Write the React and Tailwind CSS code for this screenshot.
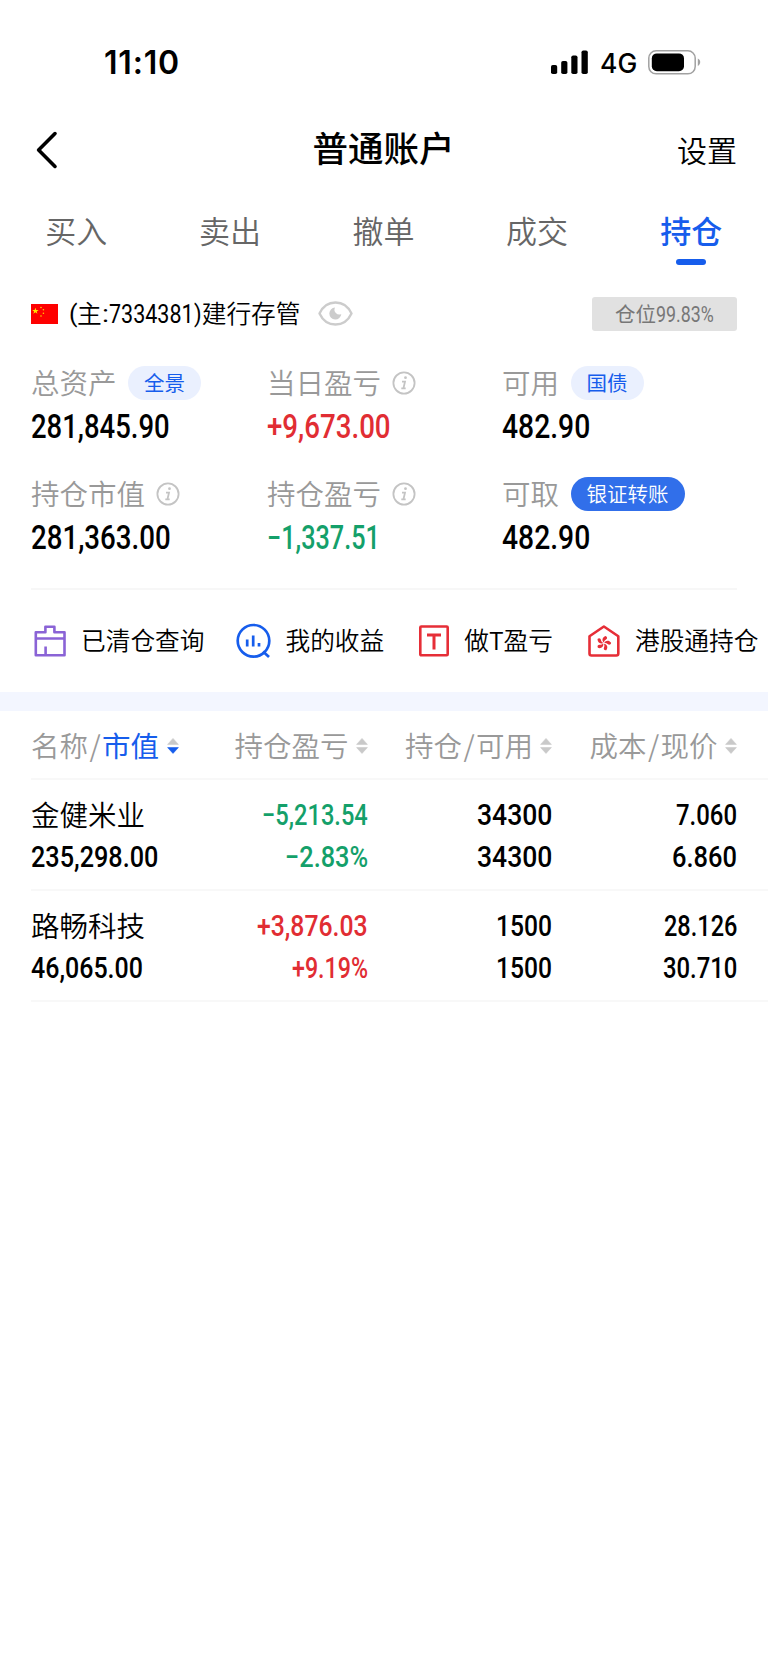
import React, { useLayoutEffect, useRef, useState } from 'react';

// Squeezes a figure to a fixed width so it reads like a condensed numeral face
const Num = ({ children, w, className = "" }) => {
  const ref = useRef(null);
  const [scale, setScale] = useState(0.84);

  useLayoutEffect(() => {
    setScale(w / ref.current.offsetWidth);
  }, [w, children]);

  return (
    <span className={`block overflow-visible whitespace-nowrap font-['Roboto','Noto_Sans_CJK_SC',sans-serif] ${className}`} style={{ width: w }}>
      <span ref={ref} className="inline-block origin-left" style={{ transform: `scaleX(${scale})` }}>{children}</span>
    </span>
  );
};

const InfoIcon = () => (
  <svg width="24" height="24" viewBox="0 0 24 24" fill="none" stroke="#c4c4c4">
    <circle cx="12" cy="12" r="10.6" strokeWidth="1.8" />
    <circle cx="13.5" cy="6.7" r="1.4" fill="#c4c4c4" stroke="none" />
    <path d="M10 10.6h3l-1.6 6.9M9.3 17.4h4.4" strokeWidth="1.8" />
  </svg>
);

const SortIcon = ({ active }) => (
  <svg width="12" height="16" viewBox="0 0 12 16">
    <path d="M6 0.4 11.4 6.4H0.6z" fill="#c9c9c9" stroke="#c9c9c9" strokeWidth="0.6" strokeLinejoin="round" />
    <path d="M6 15.4 11.4 9.6H0.6z" fill={active ? "#165dec" : "#c9c9c9"} stroke={active ? "#165dec" : "#c9c9c9"} strokeWidth="0.6" strokeLinejoin="round" />
  </svg>
);

const StatusBar = () => (
  <div className="flex h-[110px] items-start pt-[46px] text-black font-['Inter',sans-serif]">
    <div className="ml-[104px] flex h-[34px] w-[447px] items-center text-[32px] font-semibold leading-none tracking-[0.8px]">11:10</div>
    <svg className="mt-[4px]" width="37" height="24" viewBox="0 0 37 24">
      <rect x="0" y="15" width="6.2" height="9" rx="1.8" />
      <rect x="10.2" y="11" width="6.2" height="13" rx="1.8" />
      <rect x="20.3" y="5.5" width="6.2" height="18.5" rx="1.8" />
      <rect x="30.5" y="0.5" width="6.3" height="23.5" rx="1.8" />
    </svg>
    <div className="ml-[12px] flex h-[34px] w-[48px] items-center text-[26.5px] font-[450] leading-none">4G</div>
    <svg className="mt-[4px]" width="53" height="25" viewBox="0 0 53 25">
      <rect x="0.8" y="0.8" width="46.4" height="23" rx="7.3" fill="none" stroke="#a1a1a1" strokeWidth="1.5" />
      <rect x="3.8" y="3.4" width="32.2" height="17.8" rx="5" />
      <path d="M49.8 8.6c3.2 1.6 3.2 5.8 0 7.4z" fill="#a1a1a1" />
    </svg>
  </div>
);

const Header = () => (
  <div className="grid h-[80px] grid-cols-3 items-center pl-[30px] pr-[31px] text-black">
    <svg className="ml-[6px]" width="22" height="38" viewBox="0 0 22 38" fill="none" stroke="#000" strokeWidth="3.6" strokeLinecap="round" strokeLinejoin="round">
      <path d="M19 2.6 2.6 19 19 35.4" />
    </svg>
    <h1 className="pb-[6px] text-center text-[35.5px] font-medium leading-none">普通账户</h1>
    <div className="pb-[2px] text-right text-[30px] font-[350] leading-none">设置</div>
  </div>
);

const tabs = ["买入", "卖出", "撤单", "成交", "持仓"];

const Tabs = () => (
  <div className="grid h-[86px] grid-cols-5 text-[31px] leading-none text-[#666]">
    {tabs.map((tab) => (
      <div key={tab} className={`flex flex-col items-center pt-[24px] ${tab === "持仓" ? "font-medium text-[#165dec]" : "pr-px font-[350]"}`}>
        {tab}
        {tab === "持仓" && <span className="mt-[13.5px] h-[6px] w-[30px] rounded-full bg-[#165dec]" />}
      </div>
    ))}
  </div>
);

const Account = () => (
  <div className="flex h-[76px] items-center pl-[31px] pr-[31px] text-[24.7px] leading-none text-black">
    <svg width="27" height="20" viewBox="0 0 27 20">
      <rect width="27" height="20" fill="#fe0000" />
      <path d="M4.4 3.7 5.2 6h2.4L5.7 7.4l.7 2.3-2-1.4-2 1.4.7-2.3L1.2 6h2.4z" fill="#ffe600" />
      <circle cx="10" cy="3.5" r="0.8" fill="#ffd200" />
      <circle cx="12.4" cy="5.8" r="0.8" fill="#ffd200" />
      <circle cx="12.4" cy="9.3" r="0.8" fill="#ffd200" />
      <circle cx="10" cy="12" r="0.8" fill="#ffd200" />
    </svg>
    <Num w={8} className="ml-[11px]">(</Num>
    <span className="pb-[3px] font-[350]">主</span>
    <Num w={7}>:</Num>
    <Num w={85} className="pt-px text-[25.8px]">7334381</Num>
    <Num w={8}>)</Num>
    <span className="pb-[3px] font-[350]">建行存管</span>
    <svg className="ml-[18px] mb-px" width="35" height="25" viewBox="0 0 35 25" fill="none">
      <path d="M1.5 12.5C5 5 11 1.5 17.5 1.5S30 5 33.5 12.5C30 20 24 23.5 17.5 23.5S5 20 1.5 12.5Z" stroke="#ccc" strokeWidth="2.4" strokeLinejoin="round" />
      <path d="M17 6.5a6 6 0 1 0 6.3 6.5 4.8 4.8 0 0 1-6.3-6.5Z" fill="#ccc" />
    </svg>
    <div className="ml-auto flex h-[34px] w-[145px] items-center justify-center rounded-[3px] bg-[#e1e1e1] text-[20.5px] text-[#777]">
      <span className="pb-[2px]">仓位</span><Num w={58} className="pt-px text-[21.5px]">99.83%</Num>
    </div>
  </div>
);

const stats = [
  { label: "总资产", value: "281,845.90", w: 139, pill: "全景" },
  { label: "当日盈亏", value: "+9,673.00", w: 124, info: true, color: "text-[#e12d33]" },
  { label: "可用", value: "482.90", w: 88, pill: "国债" },
  { label: "持仓市值", value: "281,363.00", w: 140, info: true },
  { label: "持仓盈亏", value: "−1,337.51", w: 113, info: true, color: "text-[#14a06a]" },
  { label: "可取", value: "482.90", w: 88, pill: "银证转账", solid: true },
];

const Stats = () => (
  <div className="mx-[31px] grid h-[238px] grid-cols-[236px_235px_1fr] grid-rows-[111px_127px] border-b-2 border-[#f7f7f7]">
    {stats.map((s) => (
      <div key={s.label} className="pt-[13px] leading-none">
        <div className="flex h-[35px] items-center text-[28.5px] text-[#999]">
          <span className="pb-px font-[350]">{s.label}</span>
          {s.info && <span className="ml-[11px]"><InfoIcon /></span>}
          {s.pill && (
            <span className={`ml-[11.5px] flex h-[34px] items-center rounded-full px-4 pb-px text-[20.5px] ${s.solid ? "bg-[#316fea] font-[350] text-white" : "bg-[#eaf0fe] text-[#165dec]"}`}>
              {s.pill}
            </span>
          )}
        </div>
        <Num w={s.w} className={`mt-[10.5px] text-[32.8px] font-medium ${s.color || "text-black"}`}>{s.value}</Num>
      </div>
    ))}
  </div>
);

const Shortcuts = () => (
  <div className="flex h-[102px] items-center overflow-hidden whitespace-nowrap pl-[34px] text-[24.7px] font-[350] leading-none text-black">
    <svg width="32" height="32" viewBox="0 0 32 32" fill="none" stroke="#8a63d6" strokeWidth="2.6" strokeLinejoin="round">
      <path d="M1.8 30.3V7.2h9.6V1.7h9v5.5h10.100v23.100zM1.8 13.500h28.700M11.600 30v-8.500" />
    </svg>
    <span className="ml-[15px] pb-[3px]">已清仓查询</span>
    <svg className="ml-[32px]" width="36" height="36" viewBox="0 0 36 36" fill="none" stroke="#165dec" strokeWidth="2.7">
      <circle cx="17.5" cy="17.8" r="15.8" />
      <path d="m27 28.5 6 5.5" />
      <path d="M11.2 16.5v7M17.2 12.5v11M23 20v3.5" />
    </svg>
    <span className="ml-[13px] pb-[3px]">我的收益</span>
    <svg className="ml-[35px]" width="30" height="32" viewBox="0 0 30 32" fill="none" stroke="#e62e37">
      <rect x="1.3" y="1.5" width="27.4" height="28.8" rx="1" strokeWidth="2.6" />
      <path d="M8 10h14M15 10v14.5" strokeWidth="3" />
    </svg>
    <span className="ml-[15px] pb-[3px]">做T盈亏</span>
    <svg className="ml-[35px]" width="32" height="32" viewBox="0 0 32 32" fill="none">
      <path d="M1.5 11.3 15.9 1.5 30.3 11.3V28.5a2 2 0 0 1-2 2H3.5a2 2 0 0 1-2-2z" stroke="#e62e37" strokeWidth="2.6" strokeLinejoin="round" />
      <g fill="#e62e37">
        {[10, 82, 154, 226, 298].map((deg) => (
          <path key={deg} d="M15.7 17.6c-2.600-1.700-2.500-5.100.7-6.800 2.200.6 2.100 2.700.7 3.600-.8.7-1.300 1.700-1.400 3.200Z" transform={`rotate(${deg} 15.7 18.2)`} />
        ))}
      </g>
    </svg>
    <span className="ml-[15px] pb-[3px]">港股通持仓</span>
  </div>
);

const holdings = [
  {
    name: "金健米业", value: ["235,298.00", 127],
    profit: ["−5,213.54", 106], rate: ["−2.83%", 83], color: "text-[#14a06a]",
    held: ["34300", 75], usable: ["34300", 75],
    cost: ["7.060", 61], price: ["6.860", 65],
  },
  {
    name: "路畅科技", value: ["46,065.00", 112],
    profit: ["+3,876.03", 111], rate: ["+9.19%", 76], color: "text-[#e12d33]",
    held: ["1500", 56], usable: ["1500", 56],
    cost: ["28.126", 73], price: ["30.710", 74],
  },
];

const Pair = ({ top, bottom, className = "" }) => (
  <div className={`flex flex-col items-end pt-px text-[29px] font-medium ${className}`}>
    <Num w={top[1]} className="h-[42px]">{top[0]}</Num>
    <Num w={bottom[1]}>{bottom[0]}</Num>
  </div>
);

const Holdings = () => (
  <div className="pl-[31px] leading-none">
    <div className="grid h-[69px] grid-cols-[152px_184.5px_184.5px_184.5px] items-center border-b-2 border-[#f8f8f8] pt-[2px] text-[28.5px] font-[350] text-[#999]">
      <div className="flex items-center whitespace-nowrap">
        名称<span className="w-[14px] text-center">/</span><span className="font-normal text-[#165dec]">市值</span>
        <span className="ml-[8px]"><SortIcon active /></span>
      </div>
      {[["持仓盈亏"], ["持仓", "可用"], ["成本", "现价"]].map(([a, b]) => (
        <div key={a + b} className="flex items-center justify-end whitespace-nowrap">
          {a}
          {b && <span className="w-[14px] text-center">/</span>}
          {b}
          <span className="ml-[7px]"><SortIcon /></span>
        </div>
      ))}
    </div>
    {holdings.map((h) => (
      <div key={h.name} className="grid h-[111px] grid-cols-[152px_185px_184px_185px] border-b-2 border-[#f8f8f8] pt-[20px] text-black">
        <div>
          <div className="h-[43px] whitespace-nowrap text-[28.5px] font-[350]">{h.name}</div>
          <Num w={h.value[1]} className="text-[29px] font-medium">{h.value[0]}</Num>
        </div>
        <Pair top={h.profit} bottom={h.rate} className={h.color} />
        <Pair top={h.held} bottom={h.usable} />
        <Pair top={h.cost} bottom={h.price} />
      </div>
    ))}
  </div>
);

const App = () => {
  return (
    <div className="min-h-[1670px] w-[768px] overflow-hidden bg-white font-['Noto_Sans_CJK_SC',sans-serif]">
      <StatusBar />
      <Header />
      <Tabs />
      <Account />
      <Stats />
      <Shortcuts />
      <div className="h-[19px] bg-[#f3f6ff]" />
      <Holdings />
    </div>
  );
};

export default App;
